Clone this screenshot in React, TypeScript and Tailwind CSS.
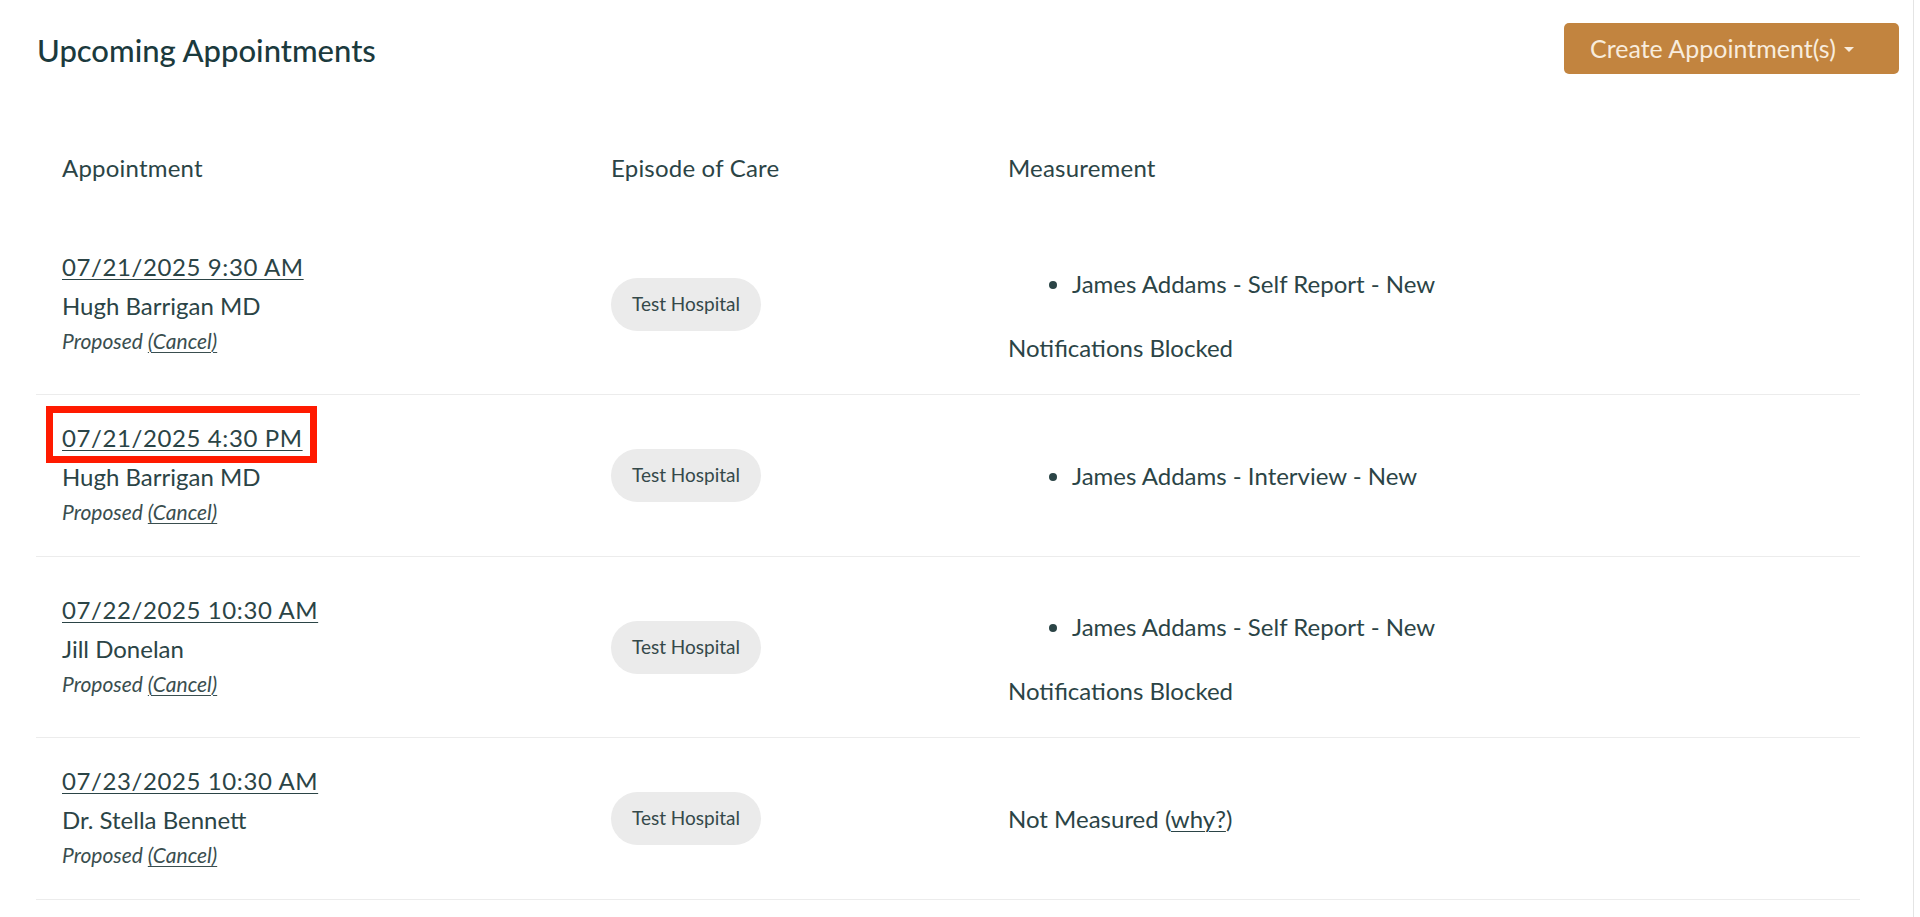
type Appointment = {
  date: string;
  provider: string;
  measures: string[];
  blocked?: boolean;
  notMeasured?: boolean;
  highlight?: boolean;
};

const appointments: Appointment[] = [
  {
    date: "07/21/2025 9:30 AM",
    provider: "Hugh Barrigan MD",
    measures: ["James Addams - Self Report - New"],
    blocked: true,
  },
  {
    date: "07/21/2025 4:30 PM",
    provider: "Hugh Barrigan MD",
    measures: ["James Addams - Interview - New"],
    highlight: true,
  },
  {
    date: "07/22/2025 10:30 AM",
    provider: "Jill Donelan",
    measures: ["James Addams - Self Report - New"],
    blocked: true,
  },
  {
    date: "07/23/2025 10:30 AM",
    provider: "Dr. Stella Bennett",
    measures: [],
    notMeasured: true,
  },
];

export default function App() {
  return (
    <div className="min-h-screen w-full overflow-hidden bg-white font-['Lato','Noto_Sans',sans-serif] text-[#2b4446]">
      <div className="min-h-[917px] w-[1914px] border-r border-[#e4e4e4] pl-[36px] pr-[14px] pt-[23px]">
        <div className="flex items-start justify-between">
          <h2 className="ml-[1px] mt-[7px] text-[31px] font-medium leading-[40px] text-[#1b3a3d]">
            Upcoming Appointments
          </h2>
          <button className="flex h-[51px] w-[335px] items-center gap-[8px] rounded-[5px] bg-[#c2843f] pl-[26px] text-[25px] text-[#f8ecdd]">
            <span>Create Appointment(s)</span>
            <svg width="10" height="5" viewBox="0 0 10 5" className="mt-[2px]">
              <path d="M0 0h10L5 5z" fill="currentColor" />
            </svg>
          </button>
        </div>

        <table className="mt-12 w-[1824px] table-fixed border-collapse text-[24px]">
          <colgroup>
            <col className="w-[549px]" />
            <col className="w-[397px]" />
            <col className="w-[878px]" />
          </colgroup>
          <thead>
            <tr className="tracking-[0.2px]">
              <th className="px-[26px] py-[26px] text-left font-normal leading-[40px]">Appointment</th>
              <th className="px-[26px] py-[26px] text-left font-normal leading-[40px]">Episode of Care</th>
              <th className="px-[26px] py-[26px] text-left font-normal leading-[40px]">Measurement</th>
            </tr>
          </thead>
          <tbody>
            {appointments.map((a) => (
              <Row key={a.date} appt={a} />
            ))}
          </tbody>
        </table>
      </div>
    </div>
  );
}

function Row({ appt }: { appt: Appointment }) {
  return (
    <tr className="border-b border-[#ececec]">
      <td className="px-[26px] pb-[29px] pt-[23px] align-middle">
        <div className="leading-[39px]">
          <a
            href="#"
            className="relative inline-block tracking-[0.6px] underline decoration-1 underline-offset-[3px]"
          >
            {appt.date}
            {appt.highlight && (
              <span className="pointer-events-none absolute -bottom-[6px] -left-[16px] -right-[14px] -top-[12px] border-[7px] border-[#ff1a00]" />
            )}
          </a>
        </div>
        <div className="leading-[39px]">{appt.provider}</div>
        <div className="text-[21px] italic leading-[31px] text-[#3a4e4f]">
          Proposed{" "}
          <a href="#" className="underline decoration-1 underline-offset-[3px]">
            (Cancel)
          </a>
        </div>
      </td>
      <td className="px-[26px] py-[26px] align-middle">
        <span className="inline-flex h-[53px] w-[150px] items-center justify-center rounded-full bg-[#ebebeb] text-[19px] text-[#35494a]">
          Test Hospital
        </span>
      </td>
      <td className="px-[26px] py-[26px] align-middle">
        {appt.measures.length > 0 && (
          <ul className="my-6 list-disc pl-[64px]">
            {appt.measures.map((m) => (
              <li key={m} className="leading-[40px]">
                {m}
              </li>
            ))}
          </ul>
        )}
        {appt.blocked && <div className="leading-[40px]">Notifications Blocked</div>}
        {appt.notMeasured && (
          <div className="leading-[40px]">
            Not Measured (
            <a href="#" className="underline decoration-1 underline-offset-[3px]">
              why?
            </a>
            )
          </div>
        )}
      </td>
    </tr>
  );
}
